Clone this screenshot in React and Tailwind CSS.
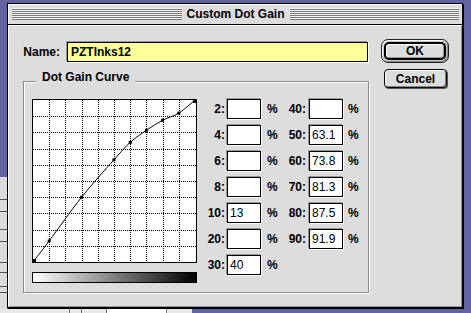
import React from "react"

const points = [[0, 0], [10, 13], [30, 40], [50, 63.1], [60, 73.8], [70, 81.3], [80, 87.5], [90, 91.9], [100, 100]]
const px = (v) => 1 + v * 1.62
const py = (v) => 163 - v * 1.62

function curvePath() {
    const p = points.map(([x, y]) => [px(x), py(y)])
    let d = `M${p[0][0]},${p[0][1]}`
    for (let i = 0; i < p.length - 1; i++) {
        const p0 = p[i - 1] || p[i]
        const p1 = p[i]
        const p2 = p[i + 1]
        const p3 = p[i + 2] || p2
        const c1 = [p1[0] + (p2[0] - p0[0]) / 6, p1[1] + (p2[1] - p0[1]) / 6]
        const c2 = [p2[0] - (p3[0] - p1[0]) / 6, p2[1] - (p3[1] - p1[1]) / 6]
        d += ` C${c1} ${c2} ${p2}`
    }
    return d
}

const leftFields = [["2", ""], ["4", ""], ["6", ""], ["8", ""], ["10", "13"], ["20", ""], ["30", "40"]]
const rightFields = [["40", ""], ["50", "63.1"], ["60", "73.8"], ["70", "81.3"], ["80", "87.5"], ["90", "91.9"]]

function Field({ value }) {
    return (
        <input
            readOnly
            value={value}
            className="w-[34px] h-[20px] border border-black bg-white pl-[2px] text-[12px] leading-[18px] outline-none shadow-[-1px_-1px_0_#999,1px_1px_0_#fff]"
        />
    )
}

function Curve() {
    const grid = []
    for (let k = 1; k < 10; k++) {
        const g = Math.round(1 + 16.2 * k) + 0.5
        const h = Math.round(163 - 16.2 * k) + 0.5
        grid.push(<line key={"v" + k} x1={g} y1="1" x2={g} y2="163" stroke="#000" strokeDasharray="1 1" />)
        grid.push(<line key={"h" + k} x1="1" y1={h} x2="164" y2={h} stroke="#000" strokeDasharray="1 1" />)
    }
    return (
        <svg width="165" height="164" viewBox="0 0 165 164" className="block">
            <rect x="0.5" y="0.5" width="164" height="163" fill="#fff" stroke="#000" />
            {grid}
            <path d={curvePath()} fill="none" stroke="#000" strokeWidth="1" />
            {points.map(([x, y], i) => (
                <rect key={i} x={Math.min(161, Math.max(1, px(x) - 1.5))} y={Math.min(160, Math.max(1, py(y) - 1.5))} width="3" height="3" fill="#000" />
            ))}
        </svg>
    )
}

export default function App() {
    return (
        <div className="relative w-[471px] h-[313px] overflow-hidden bg-[#6262a0] pl-[7px] pt-[3px] font-['Liberation_Sans',Arial,sans-serif] text-black text-[12px]">
            {/* windows behind the dialog */}
            <div className="absolute left-0 top-[177px] w-[7px] h-[136px] bg-[#dcdcdc] flex flex-col">
                <div className="h-[23px] border-b border-[#555]" />
                <div className="h-[12px] border-b border-[#555]" />
                <div className="h-[18px] border-b border-[#555]" />
                <div className="h-[12px] border-b border-[#555]" />
                <div className="h-[21px] border-b border-[#555]" />
                <div className="h-[10px] border-b border-[#555]" />
                <div className="h-[14px] border-b border-[#555]" />
                <div className="h-[6px] border-b border-[#555]" />
            </div>
            <div className="absolute left-0 top-[309px] w-[192px] h-[4px] bg-[#e8e8e8] flex">
                <div className="w-[70px] border-r border-[#777]" />
                <div className="w-[12px] border-r border-[#777]" />
                <div className="w-[25px] border-r border-[#777]" />
                <div className="w-[60px] border-r border-[#777] bg-white" />
            </div>

            <div className="relative z-10 w-[456px] h-[305px] border border-black bg-[#dddddd] shadow-[1px_1px_0_#000] flex flex-col">
                {/* title bar */}
                <div className="h-[21px] border-b border-black bg-[#dddddd] flex items-center pl-[4px] pr-[3px] shadow-[inset_1px_1px_0_#fff]">
                    <div className="flex-1 h-[12px] bg-[repeating-linear-gradient(to_bottom,#f4f4f4_0px,#f4f4f4_1px,#7a7a7a_1px,#7a7a7a_2px)]" />
                    <div className="px-[5px] font-bold text-[12px] leading-[14px]">Custom Dot Gain</div>
                    <div className="flex-1 h-[12px] bg-[repeating-linear-gradient(to_bottom,#f4f4f4_0px,#f4f4f4_1px,#7a7a7a_1px,#7a7a7a_2px)]" />
                </div>

                {/* body */}
                <div className="flex-1 flex items-start pl-[15px] pt-[14px] shadow-[inset_1px_1px_0_#fff,inset_-1px_-1px_0_#999]">
                    <div className="w-[346px] flex flex-col">
                        <div className="mt-[3px] h-[20px] flex items-center">
                            <div className="w-[37px] text-right font-bold">Name:</div>
                            <input
                                readOnly
                                value="PZTInks12"
                                className="ml-[7px] w-[301px] h-[20px] border border-black bg-[#ffff99] pl-[3px] font-bold text-[12px] outline-none shadow-[-1px_-1px_0_#999,1px_1px_0_#fff]"
                            />
                        </div>

                        <div className="relative mt-[19px] h-[212px] border border-[#8a8a8a] shadow-[1px_1px_0_#fff,inset_1px_1px_0_#fff] pl-[8px] pt-[17px] flex items-start">
                            <div className="absolute left-[12px] top-[-12px] px-[6px] bg-[#dddddd] font-bold leading-[14px]">Dot Gain Curve</div>

                            <div className="flex flex-col">
                                <Curve />
                                <div className="mt-[9px] w-[165px] h-[11px] border border-black bg-[linear-gradient(to_right,#ffffff,#000000)]" />
                            </div>

                            <div className="ml-[3px] flex flex-col gap-[6px]">
                                {leftFields.map(([label, value], i) => (
                                    <div key={label} className="h-[20px] flex items-center">
                                        <div className="w-[25px] text-right font-bold">{label}:</div>
                                        <div className="ml-[2px]"><Field value={value} /></div>
                                        <div className="ml-[6px] w-[11px] font-bold">%</div>
                                        {rightFields[i] && (
                                            <>
                                                <div className="w-[28px] text-right font-bold">{rightFields[i][0]}:</div>
                                                <div className="ml-[3px]"><Field value={rightFields[i][1]} /></div>
                                                <div className="ml-[5px] font-bold">%</div>
                                            </>
                                        )}
                                    </div>
                                ))}
                            </div>
                        </div>
                    </div>

                    {/* buttons */}
                    <div className="ml-[12px] flex flex-col">
                        <div className="w-[68px] h-[24px] rounded-[7px] border border-[#222] bg-[#c8c8c8] p-[2px] shadow-[inset_1px_1px_0_#fff,inset_-1px_-1px_0_#888]">
                            <button className="w-full h-full rounded-[5px] border-2 border-black bg-[#dddddd] font-bold text-[12px] leading-none shadow-[inset_1px_1px_0_#fff,inset_-1px_-1px_0_#999]">
                                OK
                            </button>
                        </div>
                        <button className="mt-[6px] ml-[3px] w-[63px] h-[19px] rounded-[4px] border border-black bg-[#dddddd] font-bold text-[12px] leading-none shadow-[inset_1px_1px_0_#fff,inset_-1px_-1px_0_#888,1px_1px_0_#555]">
                            Cancel
                        </button>
                    </div>
                </div>
            </div>
        </div>
    )
}
